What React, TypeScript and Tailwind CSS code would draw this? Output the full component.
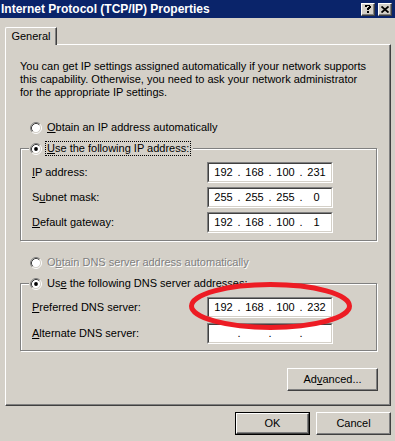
import { Fragment, type ReactNode } from 'react'

function Radio({ checked }: { checked?: boolean }) {
  return (
    <svg width="12" height="12" viewBox="0 0 12 12" className="shrink-0">
      <circle cx="6" cy="6" r="4.5" fill="#fff" />
      <path d="M2.11 9.89 A5.5 5.5 0 0 1 9.89 2.11" fill="none" stroke="#808080" />
      <path d="M9.89 2.11 A5.5 5.5 0 0 1 2.11 9.89" fill="none" stroke="#fff" />
      <path d="M2.82 9.18 A4.5 4.5 0 0 1 9.18 2.82" fill="none" stroke="#404040" />
      <path d="M9.18 2.82 A4.5 4.5 0 0 1 2.82 9.18" fill="none" stroke="#d4d0c8" />
      {checked ? <circle cx="6" cy="6" r="1.9" fill="#000" /> : null}
    </svg>
  )
}

function IpBox({ value }: { value?: string[] }) {
  return (
    <div className="h-[21px] w-[126px] border border-b-white border-l-[#808080] border-r-white border-t-[#808080]">
      <div className="flex h-full items-center border border-b-[#d4d0c8] border-l-[#404040] border-r-[#d4d0c8] border-t-[#404040] bg-white pl-[1px] leading-[13px]">
        {[0, 1, 2, 3].map((i) => (
          <Fragment key={i}>
            <span className="w-[27px] text-center">{value?.[i] ?? ''}</span>
            {i < 3 ? <span className="w-[4px] text-center">.</span> : null}
          </Fragment>
        ))}
      </div>
    </div>
  )
}

function Bevel({ children }: { children: ReactNode }) {
  return (
    <div className="flex h-full w-full items-center justify-center border border-b-[#404040] border-l-white border-r-[#404040] border-t-white bg-[#d4d0c8] text-black shadow-[inset_-1px_-1px_0_#808080]">
      {children}
    </div>
  )
}

function Field({ label, value }: { label: ReactNode; value?: string[] }) {
  return (
    <div className="flex h-[21px] items-center">
      <span className="w-[175px] leading-[13px]">{label}</span>
      <IpBox value={value} />
    </div>
  )
}

function GroupBox({ header, children }: { header: ReactNode; children: ReactNode }) {
  return (
    <div className="w-[357px] border border-[#808080] shadow-[1px_1px_0_#fff,inset_1px_1px_0_#fff]">
      <div className="-mt-[8px] ml-[8px] flex h-[15px] w-fit items-center gap-[3px] bg-[#d4d0c8] pl-[1px] pr-[2px]">
        {header}
      </div>
      {children}
    </div>
  )
}

export default function App() {
  return (
    <div className="relative h-[441px] w-[395px] overflow-hidden bg-[#d4d0c8] font-['Liberation_Sans',Arial,sans-serif] text-[11px] text-black">
      {/* title bar */}
      <div className="flex h-[18px] items-center bg-[#0a246a] pl-[1px] pr-[3px]">
        <span className="flex-1 text-[12px] font-bold leading-none text-white">
          Internet Protocol (TCP/IP) Properties
        </span>
        <div className="flex gap-[3px]">
          <div className="h-[13px] w-[14px]">
            <Bevel>
              <svg width="6" height="8" viewBox="0 0 6 8">
                <path d="M0 0h5v1h1v2h-1v1h-1v1h-2v-2h1v-1h1v-1h-2v1h-2z M2 6h2v2h-2z" fill="#000" />
              </svg>
            </Bevel>
          </div>
          <div className="h-[13px] w-[14px]">
            <Bevel>
              <svg width="8" height="7" viewBox="0 0 8 7">
                <path d="M0.5 0.5 L7.5 6.5 M7.5 0.5 L0.5 6.5" stroke="#000" strokeWidth="1.8" />
              </svg>
            </Bevel>
          </div>
        </div>
      </div>

      {/* tab */}
      <div className="relative z-10 -mb-px ml-[5px] mt-[9px] flex h-[18px] w-[52px] justify-center rounded-tl-[2px] border-l border-r border-t border-l-white border-r-[#404040] border-t-white bg-[#d4d0c8] pt-[2px] leading-[13px] shadow-[inset_-1px_0_0_#808080]">
        General
      </div>

      {/* panel */}
      <div className="ml-[5px] h-[362px] w-[386px] border border-b-[#404040] border-l-white border-r-[#404040] border-t-white pl-[14px] pt-[15px] shadow-[inset_-1px_-1px_0_#808080]">
        <div className="flex w-[358px] flex-col">
          <p className="whitespace-nowrap leading-[13px]">
            You can get IP settings assigned automatically if your network supports
            <br />
            this capability. Otherwise, you need to ask your network administrator
            <br />
            for the appropriate IP settings.
          </p>

          <div className="ml-[10px] mt-[22px] flex items-center gap-[5px] leading-[13px]">
            <Radio />
            <span>
              <u>O</u>btain an IP address automatically
            </span>
          </div>

          <div className="mt-[14px]">
            <GroupBox
              header={
                <>
                  <Radio checked />
                  <span className="border border-dotted border-black px-[1px] leading-[13px]">
                    <u>U</u>se the following IP address:
                  </span>
                </>
              }
            >
              <div className="mt-[6px] flex flex-col gap-[4px] pb-[7px] pl-[11px]">
                <Field label={<><u>I</u>P address:</>} value={['192', '168', '100', '231']} />
                <Field label={<>S<u>u</u>bnet mask:</>} value={['255', '255', '255', '0']} />
                <Field label={<><u>D</u>efault gateway:</>} value={['192', '168', '100', '1']} />
              </div>
            </GroupBox>
          </div>

          <div className="ml-[10px] mt-[15px] flex items-center gap-[5px] leading-[13px]">
            <Radio />
            <span className="text-[#808080] [text-shadow:1px_1px_0_#fff]">
              O<u>b</u>tain DNS server address automatically
            </span>
          </div>

          <div className="mt-[14px]">
            <GroupBox
              header={
                <>
                  <Radio checked />
                  <span className="border border-transparent px-[1px] leading-[13px]">
                    Us<u>e</u> the following DNS server addresses:
                  </span>
                </>
              }
            >
              <div className="mt-[6px] flex flex-col gap-[5px] pb-[6px] pl-[11px]">
                <Field label={<><u>P</u>referred DNS server:</>} value={['192', '168', '100', '232']} />
                <Field label={<><u>A</u>lternate DNS server:</>} />
              </div>
            </GroupBox>
          </div>

          <div className="mt-[17px] h-[23px] w-[91px] self-end">
            <Bevel>
              <span>
                Ad<u>v</u>anced...
              </span>
            </Bevel>
          </div>
        </div>
      </div>

      {/* dialog buttons */}
      <div className="mt-[6px] flex justify-end gap-[6px] pr-[4px]">
        <div className="h-[23px] w-[75px] border border-black">
          <Bevel>OK</Bevel>
        </div>
        <div className="h-[23px] w-[75px]">
          <Bevel>Cancel</Bevel>
        </div>
      </div>

      {/* red annotation */}
      <svg className="pointer-events-none absolute left-0 top-0" width="395" height="441">
        <ellipse cx="270.5" cy="306" rx="79" ry="21.5" fill="none" stroke="#ed1c24" strokeWidth="5" />
      </svg>
    </div>
  )
}
